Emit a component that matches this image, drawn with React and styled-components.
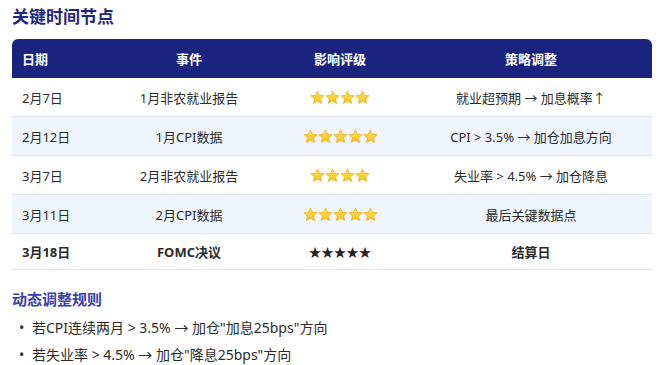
import React from 'react';
import styled, { createGlobalStyle } from 'styled-components';

const GlobalStyle = createGlobalStyle`
    body {
        margin: 0;
        background: #ffffff;
        font-family: 'Noto Sans', 'Noto Sans CJK SC', sans-serif;
        color: #333333;
    }
`;

const Page = styled.div`
    width: 660px;
    height: 365px;
    padding: 5px 8px 0 12px;
    box-sizing: border-box;
    overflow: hidden;
`;

const Title = styled.h2`
    margin: 0 0 10px;
    font-size: 17px;
    line-height: 24px;
    font-weight: 700;
    color: #1f2582;
`;

const Table = styled.div`
    width: 640px;
    display: grid;
    grid-template-columns: 96px 162px 140px 242px;
`;

const HeadCell = styled.div`
    height: 39px;
    background: #1a237e;
    color: #ffffff;
    font-size: 13px;
    font-weight: 700;
    display: flex;
    align-items: center;
    justify-content: ${p => (p.$left ? 'flex-start' : 'center')};
    padding-left: ${p => (p.$left ? '10px' : '0')};
    border-top-left-radius: ${p => (p.$first ? '6px' : '0')};
    border-top-right-radius: ${p => (p.$last ? '6px' : '0')};
`;

const Cell = styled.div`
    height: ${p => (p.$short ? '35px' : '38px')};
    border-bottom: 1px solid #e3e6ec;
    background: ${p => (p.$alt ? '#f0f4fc' : '#ffffff')};
    font-size: 13px;
    font-weight: ${p => (p.$bold ? 700 : 400)};
    color: #2b2b2b;
    display: flex;
    align-items: center;
    justify-content: ${p => (p.$left ? 'flex-start' : 'center')};
    padding-left: ${p => (p.$left ? '10px' : '0')};
`;

const Stars = styled.span`
    display: inline-flex;
    align-items: center;
`;

const TextStars = styled.span`
    font-size: 12.5px;
    color: #222;
`;

const SubTitle = styled.h3`
    margin: 19px 0 5px;
    font-size: 15px;
    line-height: 20px;
    font-weight: 700;
    color: #3a40a8;
`;

const RuleList = styled.ul`
    margin: 0;
    padding: 0;
    list-style: none;
`;

const Rule = styled.li`
    font-size: 14px;
    line-height: 27px;
    color: #2b2b2b;
    display: flex;
    &::before {
        content: '•';
        width: 20px;
        padding-left: 7px;
        box-sizing: border-box;
    }
`;

const GoldStar = () => (
    <svg width="15" height="15" viewBox="0 0 24 24">
        <defs>
            <linearGradient id="gs" x1="0" y1="0" x2="0" y2="1">
                <stop offset="0" stopColor="#ffe45c" />
                <stop offset="1" stopColor="#f7c21b" />
            </linearGradient>
        </defs>
        <path
            d="M12 1.6l3.1 6.9 7.4.7-5.6 5 1.7 7.4L12 17.8l-6.6 3.8 1.7-7.4-5.6-5 7.4-.7z"
            fill="url(#gs)"
            stroke="#e9a90f"
            strokeWidth="1.1"
            strokeLinejoin="round"
        />
    </svg>
);

const Rating = ({ n }) => (
    <Stars>
        {Array.from({ length: n }).map((_, i) => <GoldStar key={i} />)}
    </Stars>
);

const rows = [
    { date: '2月7日', event: '1月非农就业报告', stars: 4, plan: '就业超预期 → 加息概率↑' },
    { date: '2月12日', event: '1月CPI数据', stars: 5, plan: 'CPI > 3.5% → 加仓加息方向' },
    { date: '3月7日', event: '2月非农就业报告', stars: 4, plan: '失业率 > 4.5% → 加仓降息' },
    { date: '3月11日', event: '2月CPI数据', stars: 5, plan: '最后关键数据点' },
];

const App = () => {
    return (
        <Page>
            <GlobalStyle />
            <Title>关键时间节点</Title>
            <Table>
                <HeadCell $left $first>日期</HeadCell>
                <HeadCell>事件</HeadCell>
                <HeadCell>影响评级</HeadCell>
                <HeadCell $last>策略调整</HeadCell>
                {rows.map((r, idx) => (
                    <React.Fragment key={idx}>
                        <Cell $left $alt={idx % 2 === 1}>{r.date}</Cell>
                        <Cell $alt={idx % 2 === 1}>{r.event}</Cell>
                        <Cell $alt={idx % 2 === 1}><Rating n={r.stars} /></Cell>
                        <Cell $alt={idx % 2 === 1}>{r.plan}</Cell>
                    </React.Fragment>
                ))}
                <Cell $left $bold $short>3月18日</Cell>
                <Cell $bold $short>FOMC决议</Cell>
                <Cell $short><TextStars>★★★★★</TextStars></Cell>
                <Cell $bold $short>结算日</Cell>
            </Table>
            <SubTitle>动态调整规则</SubTitle>
            <RuleList>
                <Rule>若CPI连续两月 &gt; 3.5% → 加仓"加息25bps"方向</Rule>
                <Rule>若失业率 &gt; 4.5% → 加仓"降息25bps"方向</Rule>
            </RuleList>
        </Page>
    );
};

export default App;
